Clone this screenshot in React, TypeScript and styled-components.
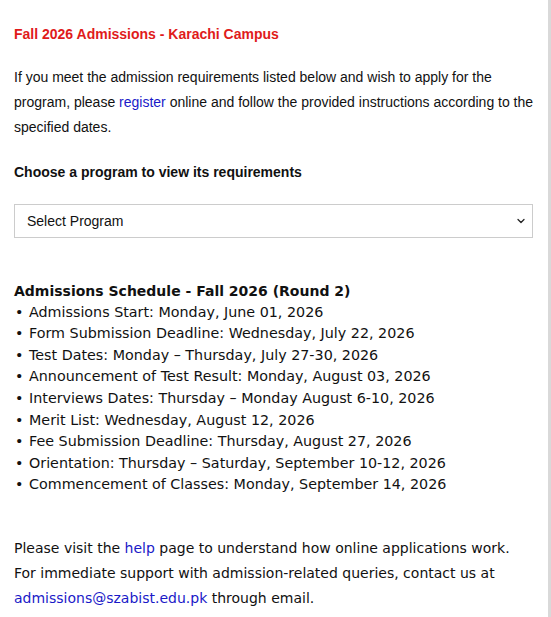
import React from 'react';
import styled, { createGlobalStyle } from 'styled-components';
import { ChevronDown } from 'lucide-react';

const GlobalStyle = createGlobalStyle`
  html, body {
    margin: 0;
    padding: 0;
    background: #ffffff;
  }
`;

const Page = styled.div`
  box-sizing: border-box;
  width: 551px;
  min-height: 617px;
  padding: 22px 15px 0 14px;
  border-right: 3px solid #d9d9d9;
  color: #111111;
  font-family: "Liberation Sans", Arial, sans-serif;
  font-size: 14px;
`;

const Title = styled.h2`
  margin: 0;
  font-size: 14px;
  line-height: 25px;
  font-weight: bold;
  color: #e01b1b;
`;

const Intro = styled.p`
  margin: 18px -8px 0 0;
  line-height: 25px;
`;

const Link = styled.a`
  color: #1a1ac8;
  text-decoration: none;
`;

const Label = styled.h3`
  margin: 20px 0 0;
  font-size: 14px;
  line-height: 25px;
  font-weight: bold;
`;

const SelectWrap = styled.div`
  position: relative;
  margin-top: 19px;
`;

const Select = styled.select`
  appearance: none;
  box-sizing: border-box;
  width: 100%;
  height: 34px;
  padding: 0 12px;
  border: 1px solid #cccccc;
  border-radius: 0;
  background: #ffffff;
  color: #111111;
  font-family: "Liberation Sans", Arial, sans-serif;
  font-size: 14px;
`;

const Arrow = styled.span`
  position: absolute;
  right: 6px;
  top: 11px;
  display: flex;
  pointer-events: none;
  color: #222222;
`;

const Schedule = styled.section`
  margin-top: 43px;
  font-family: "DejaVu Sans", Verdana, sans-serif;
  line-height: 21.6px;
`;

const ScheduleTitle = styled.div`
  font-size: 14px;
  font-weight: bold;
  line-height: 20.6px;
`;

const List = styled.ul`
  margin: 0;
  padding: 0;
  list-style: none;
  font-size: 14.3px;
`;

const Item = styled.li`
  display: flex;

  &::before {
    content: "•";
    width: 14px;
    padding-left: 1px;
    flex-shrink: 0;
  }
`;

const Help = styled.p`
  margin: 40px 0 0;
  font-family: "DejaVu Sans", Verdana, sans-serif;
  font-size: 14px;
  line-height: 25px;
`;

const dates = [
  'Admissions Start: Monday, June 01, 2026',
  'Form Submission Deadline: Wednesday, July 22, 2026',
  'Test Dates: Monday – Thursday, July 27-30, 2026',
  'Announcement of Test Result: Monday, August 03, 2026',
  'Interviews Dates: Thursday – Monday August 6-10, 2026',
  'Merit List: Wednesday, August 12, 2026',
  'Fee Submission Deadline: Thursday, August 27, 2026',
  'Orientation: Thursday – Saturday, September 10-12, 2026',
  'Commencement of Classes: Monday, September 14, 2026',
];

const App = () => {
  return (
    <>
      <GlobalStyle />
      <Page>
        <Title>Fall 2026 Admissions - Karachi Campus</Title>
        <Intro>
          If you meet the admission requirements listed below and wish to apply for the program,
          please <Link href="#">register</Link> online and follow the provided instructions
          according to the specified dates.
        </Intro>
        <Label>Choose a program to view its requirements</Label>
        <SelectWrap>
          <Select defaultValue="">
            <option value="">Select Program</option>
          </Select>
          <Arrow>
            <ChevronDown size={12} strokeWidth={2.5} />
          </Arrow>
        </SelectWrap>
        <Schedule>
          <ScheduleTitle>Admissions Schedule - Fall 2026 (Round 2)</ScheduleTitle>
          <List>
            {dates.map((d) => (
              <Item key={d}>{d}</Item>
            ))}
          </List>
        </Schedule>
        <Help>
          Please visit the <Link href="#">help</Link> page to understand how online applications
          work.
          <br />
          For immediate support with admission-related queries, contact us at
          <br />
          <Link href="#">admissions@szabist.edu.pk</Link> through email.
        </Help>
      </Page>
    </>
  );
};

export default App;
